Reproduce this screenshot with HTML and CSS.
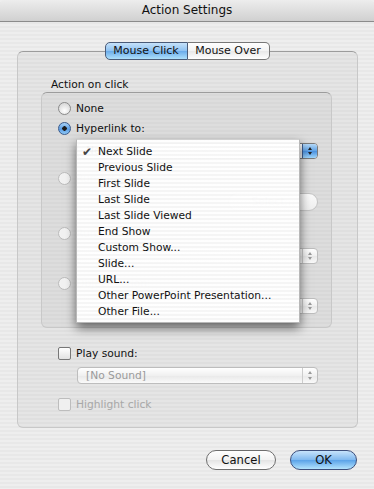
FILE: index.html
```html
<!DOCTYPE html>
<html lang="en">
<head>
    <meta charset="UTF-8">
    <title>Action Settings</title>
    <link rel="stylesheet" href="styles.css">
</head>
<body>
<div class="window">
    <div class="titlebar">Action Settings</div>

    <div class="tabs">
        <span class="tab selected">Mouse Click</span>
        <span class="tab">Mouse Over</span>
    </div>

    <div class="group">
        <div class="group-label">Action on click</div>

        <div class="inner-group">
            <div class="row"><span class="radio"></span>None</div>
            <div class="row"><span class="radio on"></span>Hyperlink to:</div>
            <div class="popup active"><span class="popup-text">Next Slide</span><span class="arrows"></span></div>

            <div class="row spaced disabled"><span class="radio"></span>Run program:</div>
            <div class="btn-row"><span class="small-btn">Select...</span></div>

            <div class="row spaced2 disabled"><span class="radio"></span>Run macro:</div>
            <div class="popup dim"><span class="popup-text"></span><span class="arrows"></span></div>

            <div class="row spaced disabled"><span class="radio"></span>Object action:</div>
            <div class="popup dim"><span class="popup-text"></span><span class="arrows"></span></div>
        </div>

        <div class="row check-row"><span class="check"></span>Play sound:</div>
        <div class="popup dim sound"><span class="popup-text">[No Sound]</span><span class="arrows"></span></div>
        <div class="row check-row2 disabled"><span class="check"></span>Highlight click</div>
    </div>

    <div class="buttons">
        <span class="button">Cancel</span>
        <span class="button default">OK</span>
    </div>

    <ul class="menu">
        <li class="checked">Next Slide</li>
        <li>Previous Slide</li>
        <li>First Slide</li>
        <li>Last Slide</li>
        <li>Last Slide Viewed</li>
        <li>End Show</li>
        <li>Custom Show...</li>
        <li>Slide...</li>
        <li>URL...</li>
        <li>Other PowerPoint Presentation...</li>
        <li>Other File...</li>
    </ul>
</div>
</body>
</html>
```

FILE: styles.css
```css
* {
    box-sizing: border-box;
}
body {
    margin: 0;
    font-family: "DejaVu Sans", "Liberation Sans", sans-serif;
    font-size: 10.7px;
    color: #111;
}
.window {
    position: relative;
    width: 374px;
    height: 489px;
    overflow: hidden;
    background: repeating-linear-gradient(to bottom, #eeeeee 0, #eeeeee 2px, #e8e8e8 2px, #e8e8e8 4px);
}
.titlebar {
    height: 22px;
    line-height: 21px;
    text-align: center;
    font-size: 12px;
    color: #111;
    background: linear-gradient(to bottom, #ededed, #d0d0d0);
    border-bottom: 1px solid #8c8c8c;
    border-radius: 5px 5px 0 0;
}
.tabs {
    display: flex;
    justify-content: center;
    margin-top: 20px;
    margin-bottom: -9px;
    position: relative;
    z-index: 1;
}
.tab {
    width: 82px;
    height: 18px;
    line-height: 16px;
    text-align: center;
    font-size: 11px;
    background: linear-gradient(to bottom, #ffffff, #f3f3f3 50%, #e8e8e8 51%, #ffffff);
    border: 1px solid #777;
    border-left: none;
    border-radius: 0 5px 5px 0;
}
.tab.selected {
    width: 83px;
    border: 1px solid #4a5b78;
    border-radius: 5px 0 0 5px;
    background: linear-gradient(to bottom, #c6e2fa, #8dc1f1 50%, #6aabea 51%, #aee0fb);
}
.group {
    margin: 0 16px 0 17px;
    height: 377px;
    padding: 26px 25px 0 23px;
    background: rgba(0, 0, 0, 0.035);
    border: 1px solid #c8c8c8;
    border-top-color: #9c9c9c;
    border-radius: 6px;
}
.group-label {
    margin-left: 10px;
    height: 14px;
    line-height: 14px;
}
.inner-group {
    height: 236px;
    padding: 7px 13px 0 16px;
    background: rgba(0, 0, 0, 0.03);
    border: 1px solid #c8c8c8;
    border-top-color: #9c9c9c;
    border-radius: 6px;
}
.row {
    display: flex;
    align-items: center;
    height: 16px;
    margin-top: 4px;
}
.row:first-child {
    margin-top: 0;
}
.row.spaced { margin-top: 11px; }
.row.spaced2 { margin-top: 14px; }
.disabled { color: #a8a8a8; }
.radio {
    width: 13px;
    height: 13px;
    border-radius: 50%;
    border: 1px solid #8a8a8a;
    background: radial-gradient(circle at 50% 70%, #ffffff, #dcdcdc 70%);
    margin-right: 5px;
    flex: none;
}
.disabled .radio {
    border-color: #bbb;
    background: #f2f2f2;
}
.radio.on {
    border-color: #3a5a8c;
    background: radial-gradient(circle, #1d1d1d 0, #1d1d1d 2px, transparent 2.5px), linear-gradient(to bottom, #a9d3f6, #5a9ce4 55%, #8ec9f6);
}
.popup {
    display: flex;
    height: 16px;
    margin: 7px 0 0 19px;
    border: 1px solid #999;
    border-radius: 4px;
    background: linear-gradient(to bottom, #ffffff, #f0f0f0 50%, #e8e8e8 51%, #fafafa);
}
.popup-text {
    flex: 1;
    padding-left: 8px;
    line-height: 14px;
}
.arrows {
    width: 15px;
    border-left: 1px solid #aaa;
    border-radius: 0 3px 3px 0;
    position: relative;
}
.arrows::before, .arrows::after {
    content: "";
    position: absolute;
    left: 5px;
    border-left: 2.5px solid transparent;
    border-right: 2.5px solid transparent;
}
.arrows::before {
    top: 3px;
    border-bottom: 3px solid #222;
}
.arrows::after {
    bottom: 3px;
    border-top: 3px solid #222;
}
.popup.active {
    border-color: #7a7a7a;
}
.popup.active .arrows {
    background: linear-gradient(to bottom, #b5d9f8, #5ea2e6 50%, #4a90df 51%, #9fd6fb);
    border-left-color: #3e5f93;
}
.popup.dim {
    border-color: #bdbdbd;
    color: #9a9a9a;
}
.popup.dim .arrows {
    border-left-color: #ccc;
}
.popup.dim .arrows::before { border-bottom-color: #999; }
.popup.dim .arrows::after { border-top-color: #999; }
.btn-row {
    display: flex;
    justify-content: flex-end;
    margin-top: 7px;
}
.small-btn {
    width: 90px;
    height: 18px;
    line-height: 16px;
    text-align: center;
    border: 1px solid #c4c4c4;
    border-radius: 9px;
    color: #b5b5b5;
    background: linear-gradient(to bottom, #fbfbfb, #efefef);
}
.check {
    width: 13px;
    height: 13px;
    border: 1px solid #777;
    border-radius: 2px;
    background: linear-gradient(to bottom, #ffffff, #e2e2e2);
    margin-right: 5px;
    flex: none;
}
.disabled .check {
    border-color: #bdbdbd;
    background: #f0f0f0;
}
.check-row {
    margin-top: 17px;
    margin-left: 17px;
}
.sound {
    margin-left: 36px;
    margin-right: 14px;
    height: 17px;
    margin-top: 6px;
}
.sound .popup-text {
    line-height: 15px;
}
.check-row2 {
    margin-top: 12px;
    margin-left: 17px;
}
.buttons {
    display: flex;
    justify-content: flex-end;
    gap: 14px;
    margin: 22px 17px 0 0;
}
.button {
    width: 70px;
    height: 20px;
    line-height: 18px;
    text-align: center;
    font-size: 11.6px;
    border: 1px solid #6e6e6e;
    border-radius: 10px;
    background: linear-gradient(to bottom, #ffffff, #f2f2f2 50%, #e4e4e4 51%, #ffffff);
}
.button.default {
    width: 67px;
    border-color: #3d4f7c;
    background: linear-gradient(to bottom, #c7e3fb, #7fb8ef 50%, #5aa2e8 51%, #b3e3fd);
}
.menu {
    position: absolute;
    left: 76px;
    top: 139px;
    width: 224px;
    height: 184px;
    margin: 0;
    padding: 4px 0;
    list-style: none;
    background: repeating-linear-gradient(to bottom, rgba(255,255,255,0.97) 0, rgba(255,255,255,0.97) 2px, rgba(246,246,246,0.97) 2px, rgba(246,246,246,0.97) 4px);
    border: 1px solid #b8b8b8;
    border-top-color: #d0d0d0;
    box-shadow: 0 5px 10px rgba(0, 0, 0, 0.55);
}
.menu li {
    height: 16px;
    line-height: 16px;
    padding-left: 21px;
    position: relative;
}
.menu li.checked::before {
    content: "\2714";
    position: absolute;
    left: 5px;
    top: 0;
    color: #444;
    font-size: 12px;
}
```
